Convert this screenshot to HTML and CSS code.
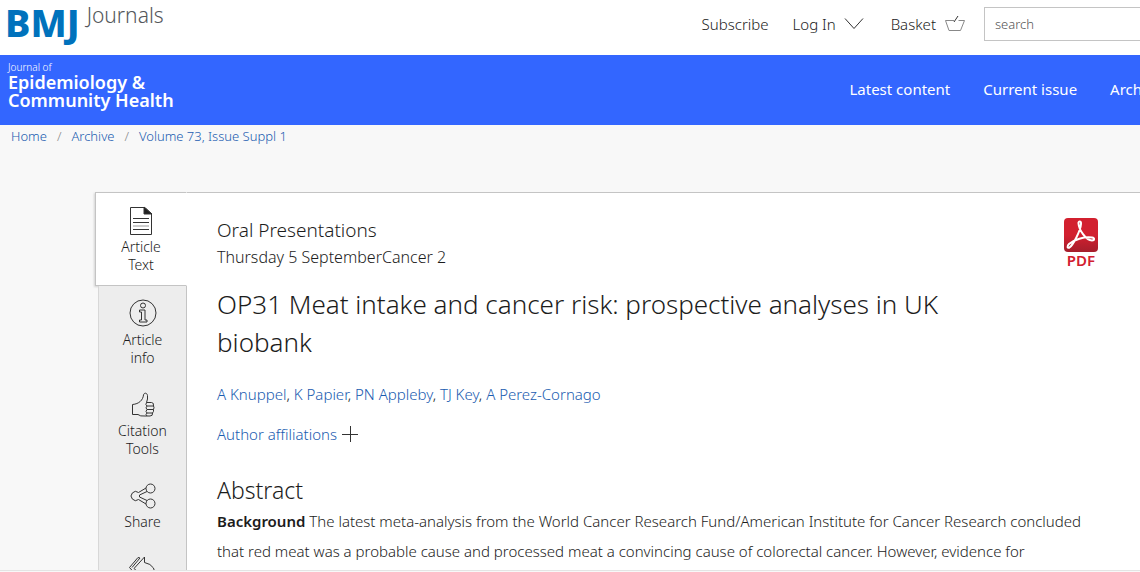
FILE: index.html
```html
<!DOCTYPE html>
<html lang="en">
<head>
	<title>OP31 Meat intake and cancer risk</title>
	<meta charset="utf-8">
	<meta name="viewport" content="width=device-width, initial-scale=1">
	<link rel="stylesheet" href="styles.css">
</head>
<body>
<div class="page">

	<header class="topbar">
		<a class="logo" href="#"><span class="logo__bmj">BMJ</span><span class="logo__journals">Journals</span></a>
		<nav class="topbar__links">
			<a class="subscribe" href="#">Subscribe</a>
			<a class="login" href="#">Log In
				<svg width="20" height="14" viewBox="0 0 20 14"><path d="M1 1.500L10 11.500L19 1.500"/></svg>
			</a>
			<a class="basket" href="#">Basket
				<svg class="basket__icon" width="22" height="18" viewBox="0 0 22 18"><path d="M10 5.500H1.500L5 15.500H16.500L20.500 5.500H14.500"/><path class="basket__handle" d="M10 7L14 1"/></svg>
			</a>
			<input class="search" type="text" placeholder="search" aria-label="search">
		</nav>
	</header>

	<div class="banner">
		<a class="journal" href="#">
			<span class="journal__small">Journal of</span>
			<span class="journal__name">Epidemiology &amp;<br>Community Health</span>
		</a>
		<nav class="banner__nav">
			<a href="#">Latest content</a>
			<a href="#">Current issue</a>
			<a href="#">Archive</a>
		</nav>
	</div>

	<nav class="crumbs">
		<a href="#">Home</a><span>/</span><a href="#">Archive</a><span>/</span><a href="#">Volume 73, Issue Suppl 1</a>
	</nav>

	<div class="main">
		<nav class="tabs">
			<a class="tab tab--active" href="#">
				<svg width="24" height="30" viewBox="0 0 24 30">
					<path d="M1.500 1.500H16L22.500 8V28.500H1.500Z"/>
					<path class="fill" d="M15 1L23 8H15Z"/>
					<path d="M4 12.500H20M4 16.500H20M4 23.500H20"/>
					<path class="faint" d="M4 20H20"/>
				</svg>
				Article<br>Text
			</a>
			<a class="tab" href="#">
				<svg width="28" height="28" viewBox="0 0 28 28">
					<circle cx="14" cy="14" r="13"/>
					<circle cx="14" cy="6.500" r="2.500"/>
					<path d="M10.500 11H16V21H18V23H10.500V21H12.500V13H10.500Z"/>
				</svg>
				Article<br>info
			</a>
			<a class="tab" href="#">
				<svg width="24" height="26" viewBox="0 0 24 26">
					<path d="M1.500 12.500C8 12 12 8 12.500 3C13 .5 16 .5 16.500 3.500Q17 7 15.500 10.500H20.500Q23 10.500 22.500 14Q23.500 15.500 22.500 17.500Q23 19.500 21.500 21Q22 24 19 24H14Q9 24.500 7 22.500H1.500Z"/>
					<path d="M22.500 14H16Q14 13 15.500 10.500M22.500 17.500H16Q14 16 16 14M21.500 21H16Q14 19.500 16 17.500M16 21Q14 22.500 16 24"/>
				</svg>
				Citation<br>Tools
			</a>
			<a class="tab" href="#">
				<svg width="28" height="26" viewBox="0 0 28 26">
					<path d="M9.500 9.500L17 5M10.500 12L18 8.500M9.500 16.500L17 21M10.500 14L18 17.500M10.500 12V14"/>
					<path d="M9.500 9.500A4.500 4.500 0 1 0 9.500 16.500"/>
					<circle cx="21.500" cy="5.500" r="4.500"/>
					<circle cx="21.500" cy="20.500" r="4.500"/>
				</svg>
				Share
			</a>
			<a class="tab" href="#">
				<svg width="28" height="26" viewBox="0 0 28 26">
					<path d="M15.500 6.500V1L5 12.500L15.500 22V17Q23 16 26 23Q28 9 15.500 6.500ZM9 1.500L0.500 11.500L10 22M9 1.500L11 2L3 11.500"/>
				</svg>
				Respond
			</a>
		</nav>

		<article class="article">
			<div class="article__head">
				<div class="article__titles">
					<p class="category">Oral Presentations</p>
					<p class="session">Thursday 5 SeptemberCancer 2</p>
					<h1>OP31 Meat intake and cancer risk: prospective analyses in UK biobank</h1>
				</div>
				<a class="pdf" href="#">
					<svg class="pdf__icon" width="34" height="34" viewBox="0 0 34 34">
						<defs>
							<linearGradient id="red" x1="0" y1="0" x2="0" y2="1">
								<stop offset="0.5" stop-color="#d2202f"/>
								<stop offset="1" stop-color="#a51e2c"/>
							</linearGradient>
						</defs>
						<rect width="34" height="34" rx="4" fill="url(#red)"/>
						<path d="M14.500 5.500C14 3 17.500 2.500 17 6C16.500 13 9 27 5.500 29.500C3.500 30.500 2.500 28.500 5 26C10 21.500 20 18.500 28 19.500C31 20 30.500 22.500 28 22.500C22 22.500 15 12 14.500 5.500Z"/>
					</svg>
					<span>PDF</span>
				</a>
			</div>
			<p class="authors"><a href="#">A Knuppel</a>, <a href="#">K Papier</a>, <a href="#">PN Appleby</a>, <a href="#">TJ Key</a>, <a href="#">A Perez-Cornago</a></p>
			<p class="affiliations"><a href="#">Author affiliations</a>
				<svg width="16" height="16" viewBox="0 0 16 16"><path d="M0 8.500H16M8.500 0V16"/></svg>
			</p>
			<h2>Abstract</h2>
			<p class="abstract"><strong>Background</strong> The latest meta-analysis from the World Cancer Research Fund/American Institute for Cancer Research concluded that red meat was a probable cause and processed meat a convincing cause of colorectal cancer. However, evidence for</p>
		</article>
	</div>

	<div class="bottom-line"></div>
</div>
</body>
</html>
```
FILE: styles.css
```css
* {
	box-sizing: border-box;
	margin: 0;
	padding: 0;
}

body {
	height: 100vh;
	overflow: hidden;
	background: #f8f8f8;
	color: #1c1c1c;
	font-family: "Noto Sans", sans-serif;
	font-size: 15px;
	font-weight: 300;
}

a {
	color: #1a5cb0;
	text-decoration: none;
}

svg {
	fill: none;
	stroke: #333;
	stroke-width: 1;
}

.page {
	min-width: 1210px;
}

/* top bar */

.topbar {
	display: flex;
	justify-content: space-between;
	height: 55px;
	padding-left: 5px;
	background: #fff;
}

.logo {
	display: flex;
	gap: 7px;
}

.logo__bmj {
	color: #0072bc;
	font-size: 38px;
	font-weight: 800;
	line-height: 44px;
}

.logo__journals {
	color: #54575b;
	font-size: 21px;
	line-height: 30px;
}

.topbar__links {
	display: flex;
	align-items: center;
	height: 48px;
}

.topbar__links a {
	display: flex;
	align-items: center;
	gap: 8px;
	margin-right: 24px;
	color: #1c1c1c;
}

.topbar__links .login {
	margin-right: 27px;
}

.topbar__links .basket {
	margin-right: 18px;
}

.basket .basket__icon {
	stroke: #888;
}

.basket .basket__handle {
	stroke: #333;
}

.search {
	width: 226px;
	height: 34px;
	padding: 0 10px;
	border: 1px solid #c4c4c4;
	background: #fff;
	font: 300 13px "Noto Sans", sans-serif;
}

.search::placeholder {
	color: #555;
}

/* journal banner */

.banner {
	display: flex;
	justify-content: space-between;
	height: 70px;
	padding: 6px 48px 0 8px;
	background: #36f;
}

.banner a {
	color: #fff;
}

.journal__small,
.journal__name {
	display: block;
}

.journal__small {
	font-size: 10px;
	line-height: 12px;
}

.journal__name {
	font-size: 18px;
	font-weight: 600;
	line-height: 18px;
}

.banner__nav {
	display: flex;
	gap: 33px;
	line-height: 56px;
	font-weight: 400;
}

/* breadcrumbs */

.crumbs {
	display: flex;
	gap: 10px;
	height: 67px;
	padding-left: 11px;
	font-size: 13px;
	line-height: 22px;
}

.crumbs span {
	color: #888;
}

/* article and its tabs */

.main {
	display: flex;
	padding-left: 95px;
}

.tabs {
	width: 92px;
}

.tab {
	display: flex;
	flex-direction: column;
	align-items: center;
	margin-left: 3px;
	padding-bottom: 25px;
	border-left: 1px solid #d8d8d8;
	border-right: 1px solid #c4c4c4;
	background: #ededed;
	color: #1c1c1c;
	font-size: 14px;
	line-height: 18px;
	text-align: center;
}

.tab svg {
	margin-bottom: 4px;
}

.tab--active {
	margin-left: 0;
	padding: 13px 0 11px;
	border: 1px solid #c4c4c4;
	border-right-color: #fff;
	background: #fff;
	box-shadow: -1px 1px 2px rgba(0, 0, 0, .15);
}

.tab--active svg {
	margin-bottom: 2px;
}

.tab--active + .tab {
	padding-top: 13px;
}

.fill {
	fill: #222;
}

.faint {
	stroke: #ccc;
	stroke-width: 2;
}

.article {
	flex: 1;
	padding: 24px 112px 60px 30px;
	border-top: 1px solid #c4c4c4;
	background: #fff;
}

.article__head {
	display: flex;
	justify-content: space-between;
}

.article__titles {
	max-width: 760px;
}

.category {
	font-size: 19px;
	line-height: 26px;
}

.session {
	font-size: 16px;
	line-height: 28px;
}

h1 {
	margin-top: 14px;
	font-size: 26px;
	font-weight: 300;
	line-height: 38px;
}

.pdf {
	display: flex;
	flex-direction: column;
	align-items: center;
	padding-top: 1px;
	color: #d2202f;
	font-size: 15px;
	font-weight: 600;
	line-height: 17px;
}

.pdf__icon {
	stroke: #fff;
	stroke-width: 2;
}

.pdf__icon rect {
	stroke: none;
}

.authors {
	margin-top: 18px;
	line-height: 30px;
}

.affiliations {
	display: flex;
	align-items: center;
	gap: 5px;
	margin-top: 10px;
	line-height: 30px;
}

h2 {
	margin-top: 25px;
	font-size: 23px;
	font-weight: 300;
	line-height: 32px;
}

.abstract {
	line-height: 30px;
}

.abstract strong {
	font-weight: 600;
}

/* edge under the visible area */

.bottom-line {
	position: fixed;
	right: 0;
	bottom: 0;
	left: 0;
	height: 2px;
	border-top: 1px solid #e4e4e4;
	background: #f8f8f8;
}
```
